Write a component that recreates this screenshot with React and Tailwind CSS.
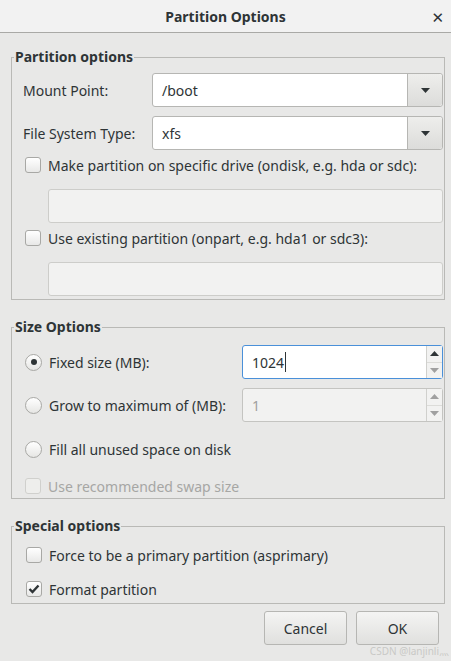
import { useState } from "react";

const font = { fontFamily: '"Noto Sans", "DejaVu Sans", "Noto Sans CJK SC", sans-serif' };

function Arrow({ up, muted }) {
  return (
    <svg width="9" height="5" viewBox="0 0 9 5">
      <path d={up ? "M0 5 L4.5 0 L9 5 Z" : "M0 0 L9 0 L4.5 5 Z"} fill={muted ? "#a0a0a0" : "#2e3436"} />
    </svg>
  );
}

function Combo({ value }) {
  return (
    <div className="flex h-[34px] flex-1 rounded-[3px] border border-[#b6b6b3] bg-white">
      <div className="flex flex-1 items-center pl-[9px] text-[#2e3436]">{value}</div>
      <div className="flex w-[35px] items-center justify-center rounded-r-[3px] border-l border-[#b6b6b3] bg-gradient-to-b from-[#eeeeec] to-[#dcdcda]">
        <Arrow />
      </div>
    </div>
  );
}

function Check({ checked, disabled }) {
  return (
    <div
      className={
        "flex h-[16px] w-[16px] shrink-0 items-center justify-center rounded-[3px] border " +
        (disabled ? "border-[#d0d0cd] bg-[#eeeeec]" : "border-[#a8a8a5] bg-gradient-to-b from-white to-[#e8e8e7]")
      }
    >
      {checked && (
        <svg width="12" height="10" viewBox="0 0 12 10">
          <path d="M1.5 5 L4.5 8 L10.5 1.5" stroke="#2e3436" strokeWidth="2.4" fill="none" />
        </svg>
      )}
    </div>
  );
}

function Radio({ on }) {
  return (
    <div className="flex h-[17px] w-[17px] shrink-0 items-center justify-center rounded-full border border-[#a8a8a5] bg-gradient-to-b from-white to-[#e6e6e4]">
      {on && <div className="h-[6px] w-[6px] rounded-full bg-[#2e3436]" />}
    </div>
  );
}

function Spin({ value, focused, disabled }) {
  return (
    <div
      className={
        "flex h-[34px] w-[201px] rounded-[3px] border " +
        (focused ? "border-[#4a90d9]" : "border-[#c4c4c1]") +
        (disabled ? " bg-[#f2f2f1]" : " bg-white")
      }
    >
      <div className={"flex flex-1 items-center pl-[9px] " + (disabled ? "text-[#a0a0a0]" : "text-[#2e3436]")}>
        {value}
        {focused && <span className="ml-[1px] h-[20px] w-[1px] bg-[#2e3436]" />}
      </div>
      <div className="flex w-[16px] flex-col border-l border-[#d0d0cd] bg-[#f2f2f1]">
        <div className="flex flex-1 items-center justify-center border-b border-[#dcdcd9]">
          <Arrow up muted={disabled} />
        </div>
        <div className="flex flex-1 items-center justify-center">
          <Arrow muted />
        </div>
      </div>
    </div>
  );
}

function Group({ title, children, className }) {
  return (
    <fieldset className={"mx-[11px] mr-[6px] border border-[#b9b9b6] p-0 " + (className || "")}>
      <legend className="ml-[2px] px-[1px] text-[14px] font-bold leading-[18px] text-[#2e3436]">{title}</legend>
      <div className="pl-[11px] pr-[1px]">{children}</div>
    </fieldset>
  );
}

export default function App() {
  const [size] = useState("1024");

  return (
    <div style={font} className="h-[661px] w-[451px] overflow-hidden bg-[#e8e8e7] text-[14px] text-[#2e3436]">
      {/* barra de titulo */}
      <div className="relative flex h-[33px] items-center justify-center border-b border-[#a9a9a6] bg-[#f2f2f2]">
        <span className="text-[14px] font-bold text-[#2e3436]">Partition Options</span>
        <span className="absolute right-[7px] top-[6px] text-[15px] font-bold text-[#2e3436]">✕</span>
      </div>

      <Group title="Partition options" className="mt-[15px]">
        <div className="mt-[7px] flex items-center">
          <span className="w-[129px]">Mount Point:</span>
          <Combo value="/boot" />
        </div>
        <div className="mt-[9px] flex items-center">
          <span className="w-[129px]">File System Type:</span>
          <Combo value="xfs" />
        </div>
        <div className="mt-[3px] flex h-[24px] items-center gap-[7px] pl-[2px]">
          <Check />
          <span>Make partition on specific drive (ondisk, e.g. hda or sdc):</span>
        </div>
        <div className="ml-[25px] mt-[12px] h-[34px] rounded-[3px] border border-[#cdcdca] bg-[#f2f2f1]" />
        <div className="mt-[3px] flex h-[24px] items-center gap-[7px] pl-[2px]">
          <Check />
          <span>Use existing partition (onpart, e.g. hda1 or sdc3):</span>
        </div>
        <div className="mb-[3px] ml-[25px] mt-[12px] h-[34px] rounded-[3px] border border-[#cdcdca] bg-[#f2f2f1]" />
      </Group>

      <Group title="Size Options" className="mt-[18px]">
        <div className="mt-[9px] flex items-center justify-between">
          <div className="flex items-center gap-[7px] pl-[2px]">
            <Radio on />
            <span>Fixed size (MB):</span>
          </div>
          <Spin value={size} focused />
        </div>
        <div className="mt-[9px] flex items-center justify-between">
          <div className="flex items-center gap-[7px] pl-[2px]">
            <Radio />
            <span>Grow to maximum of (MB):</span>
          </div>
          <Spin value="1" disabled />
        </div>
        <div className="mt-[15px] flex h-[24px] items-center gap-[7px] pl-[2px]">
          <Radio />
          <span>Fill all unused space on disk</span>
        </div>
        <div className="mt-[13px] flex h-[24px] items-center gap-[7px] pl-[2px] text-[#a6a6a4]">
          <Check disabled />
          <span>Use recommended swap size</span>
        </div>
      </Group>

      <Group title="Special options" className="mt-[18px]">
        <div className="mt-[8px] flex h-[24px] items-center gap-[7px] pl-[3px]">
          <Check />
          <span>Force to be a primary partition (asprimary)</span>
        </div>
        <div className="mb-[2px] mt-[10px] flex h-[24px] items-center gap-[7px] pl-[3px]">
          <Check checked />
          <span>Format partition</span>
        </div>
      </Group>

      <div className="mr-[12px] mt-[7px] flex justify-end gap-[9px]">
        <button className="h-[34px] w-[83px] rounded-[3px] border border-[#b6b6b3] bg-gradient-to-b from-[#f4f4f3] to-[#e0e0de] text-[#2e3436]">
          Cancel
        </button>
        <button className="h-[34px] w-[83px] rounded-[3px] border border-[#b6b6b3] bg-gradient-to-b from-[#f4f4f3] to-[#e0e0de] text-[#2e3436]">
          OK
        </button>
      </div>
      <div className="mr-[2px] whitespace-nowrap text-right text-[10px] leading-[12px] text-[#c8c8c6]">CSDN @lanjinli灬</div>
    </div>
  );
}
